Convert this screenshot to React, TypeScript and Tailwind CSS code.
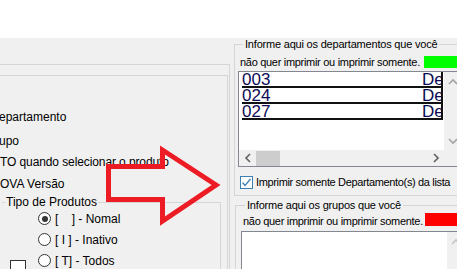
import React from "react";

function Chevron({ dir, color }: { dir: "up" | "down" | "left" | "right"; color: string }) {
  const pts: Record<string, string> = {
    up: "1,6 5,2 9,6",
    down: "1,2 5,6 9,2",
    left: "6,1 2,5 6,9",
    right: "2,1 6,5 2,9",
  };
  const horiz = dir === "left" || dir === "right";
  return (
    <svg width={horiz ? 8 : 10} height={horiz ? 10 : 8} viewBox={horiz ? "0 0 8 10" : "0 0 10 8"}>
      <polyline points={pts[dir]} fill="none" stroke={color} strokeWidth="1.6" />
    </svg>
  );
}

function Radio({ checked }: { checked?: boolean }) {
  return (
    <div className="w-[13px] h-[13px] rounded-full border border-[#333333] bg-white flex items-center justify-center shrink-0">
      {checked ? <div className="w-[6px] h-[6px] rounded-full bg-[#333333]" /> : null}
    </div>
  );
}

const rows = ["003", "024", "027"];

export default function App() {
  return (
    <div className="relative w-[457px] h-[269px] overflow-hidden bg-[#f0f0f0] text-black font-['Liberation_Sans',Arial,sans-serif] text-[12px]">
      <div className="h-[38px] bg-white" />
      <div className="flex h-[231px]">
        {/* left panel */}
        <div className="w-[230px] shrink-0 pt-[26px]">
          <div className="h-full border-t border-r border-[#d5d5d5] pt-[10px]">
            <div className="h-full mr-[1px] border-t border-r border-[#d5d5d5]">
              <div className="h-[22px] leading-[22px] mt-[30px] -ml-[1px] whitespace-nowrap">epartamento</div>
              <div className="h-[22px] leading-[22px] mt-[2px] -ml-[1px] whitespace-nowrap">upo</div>
              <div className="h-[22px] leading-[22px] -mt-[1px] whitespace-nowrap tracking-[-0.1px]">TO quando selecionar o produto</div>
              <div className="h-[22px] leading-[22px] whitespace-nowrap">OVA Versão</div>
              <fieldset className="ml-[2px] w-[219px] border-t border-r border-[#d5d5d5]">
                <legend className="ml-[3px] px-[1px] leading-[14px]">Tipo de Produtos</legend>
                <div className="h-[21px] -mt-[1px] flex items-center pl-[36px]">
                  <Radio checked />
                  <span className="ml-[4px] whitespace-pre">[    ] - Nomal</span>
                </div>
                <div className="h-[21px] flex items-center pl-[36px]">
                  <Radio />
                  <span className="ml-[4px] whitespace-pre">[ I ] - Inativo</span>
                </div>
                <div className="h-[21px] flex items-center pl-[8px]">
                  <div className="w-[16px] h-[16px] self-start mt-[10px] border border-[#333333] bg-white shrink-0" />
                  <div className="ml-[12px] flex items-center">
                    <Radio />
                    <span className="ml-[4px] whitespace-pre">[ T] - Todos</span>
                  </div>
                </div>
              </fieldset>
            </div>
          </div>
        </div>

        {/* right panel */}
        <div className="flex-1 text-[11px] tracking-[-0.2px]">
          <fieldset className="ml-[4px] w-[260px] border border-[#d5d5d5]">
            <legend className="ml-[8px] px-[2px] leading-[12px] whitespace-nowrap">Informe aqui os departamentos que você</legend>
            <div className="flex items-center h-[14px] mt-[5px] pl-[5px]">
              <span className="w-[184px] whitespace-nowrap tracking-[-0.3px]">não quer imprimir ou imprimir somente.</span>
              <div className="w-[40px] h-[12px] bg-[#00ff00]" />
            </div>
            <div className="ml-[3px] mt-[2px] w-[240px] border border-[#828790] bg-white tracking-normal">
              <div className="flex h-[78px]">
                <div className="w-[205px] shrink-0">
                  {rows.map((r) => (
                    <div key={r} className="ml-[3px] w-[201px] h-[16px] flex border-b-2 border-r-2 border-[#111111] text-[#0b0b55] text-[17px] leading-[15px]">
                      <div className="w-[180px]">{r}</div>
                      <div className="w-[19px] overflow-hidden whitespace-nowrap">De</div>
                    </div>
                  ))}
                </div>
                <div className="w-[17px] bg-[#f0f0f0] flex flex-col items-center justify-between pt-[6px] pb-[5px]">
                  <Chevron dir="up" color="#a3a3a3" />
                  <Chevron dir="down" color="#a3a3a3" />
                </div>
              </div>
              <div className="flex h-[16px]">
                <div className="w-[205px] bg-[#f0f0f0] flex items-center">
                  <div className="w-[17px] flex justify-center"><Chevron dir="left" color="#606060" /></div>
                  <div className="w-[24px] h-[15px] bg-[#cdcdcd]" />
                  <div className="flex-1" />
                  <div className="w-[17px] flex justify-center"><Chevron dir="right" color="#606060" /></div>
                </div>
                <div className="flex-1 bg-[#f0f0f0]" />
              </div>
            </div>
            <div className="flex items-center h-[13px] mt-[9px] mb-[6px] pl-[5px]">
              <div className="w-[13px] h-[13px] border border-[#3c7fb1] bg-white flex items-center justify-center shrink-0">
                <svg width="11" height="11" viewBox="0 0 11 11">
                  <polyline points="1.5,5.5 4,8.5 9.5,2" fill="none" stroke="#3c7fb1" strokeWidth="1.3" />
                </svg>
              </div>
              <span className="ml-[3px] whitespace-nowrap tracking-[-0.35px]">Imprimir somente Departamento(s) da lista</span>
            </div>
          </fieldset>

          <fieldset className="ml-[5px] mt-[3px] w-[260px] h-[80px] border-l border-t border-r border-[#d5d5d5]">
            <legend className="ml-[9px] px-[2px] leading-[12px] whitespace-nowrap">Informe aqui os grupos que você</legend>
            <div className="flex items-start h-[14px] mt-[3px] pl-[7px]">
              <span className="w-[182px] whitespace-nowrap leading-[14px] tracking-[-0.3px]">não quer imprimir ou imprimir somente.</span>
              <div className="w-[40px] h-[13px] -mt-[1px] bg-[#ff0000]" />
            </div>
            <div className="ml-[5px] mt-[3px] w-[240px] h-[60px] border border-[#828790] bg-white flex">
              <div className="w-[205px] shrink-0" />
              <div className="w-[17px] bg-[#f0f0f0] flex justify-center pt-[6px]">
                <Chevron dir="up" color="#c4c4c4" />
              </div>
            </div>
          </fieldset>
        </div>
      </div>

      {/* red arrow drawn over the form */}
      <svg className="absolute left-0 top-0 pointer-events-none" width="457" height="269" viewBox="0 0 457 269">
        <polygon
          points="108.5,166.5 162.5,166.5 162.5,150 216,185 162.5,221 162.5,199.5 108.5,199.5"
          fill="none"
          stroke="#ed1c24"
          strokeWidth="5"
          strokeLinejoin="miter"
        />
      </svg>
    </div>
  );
}
